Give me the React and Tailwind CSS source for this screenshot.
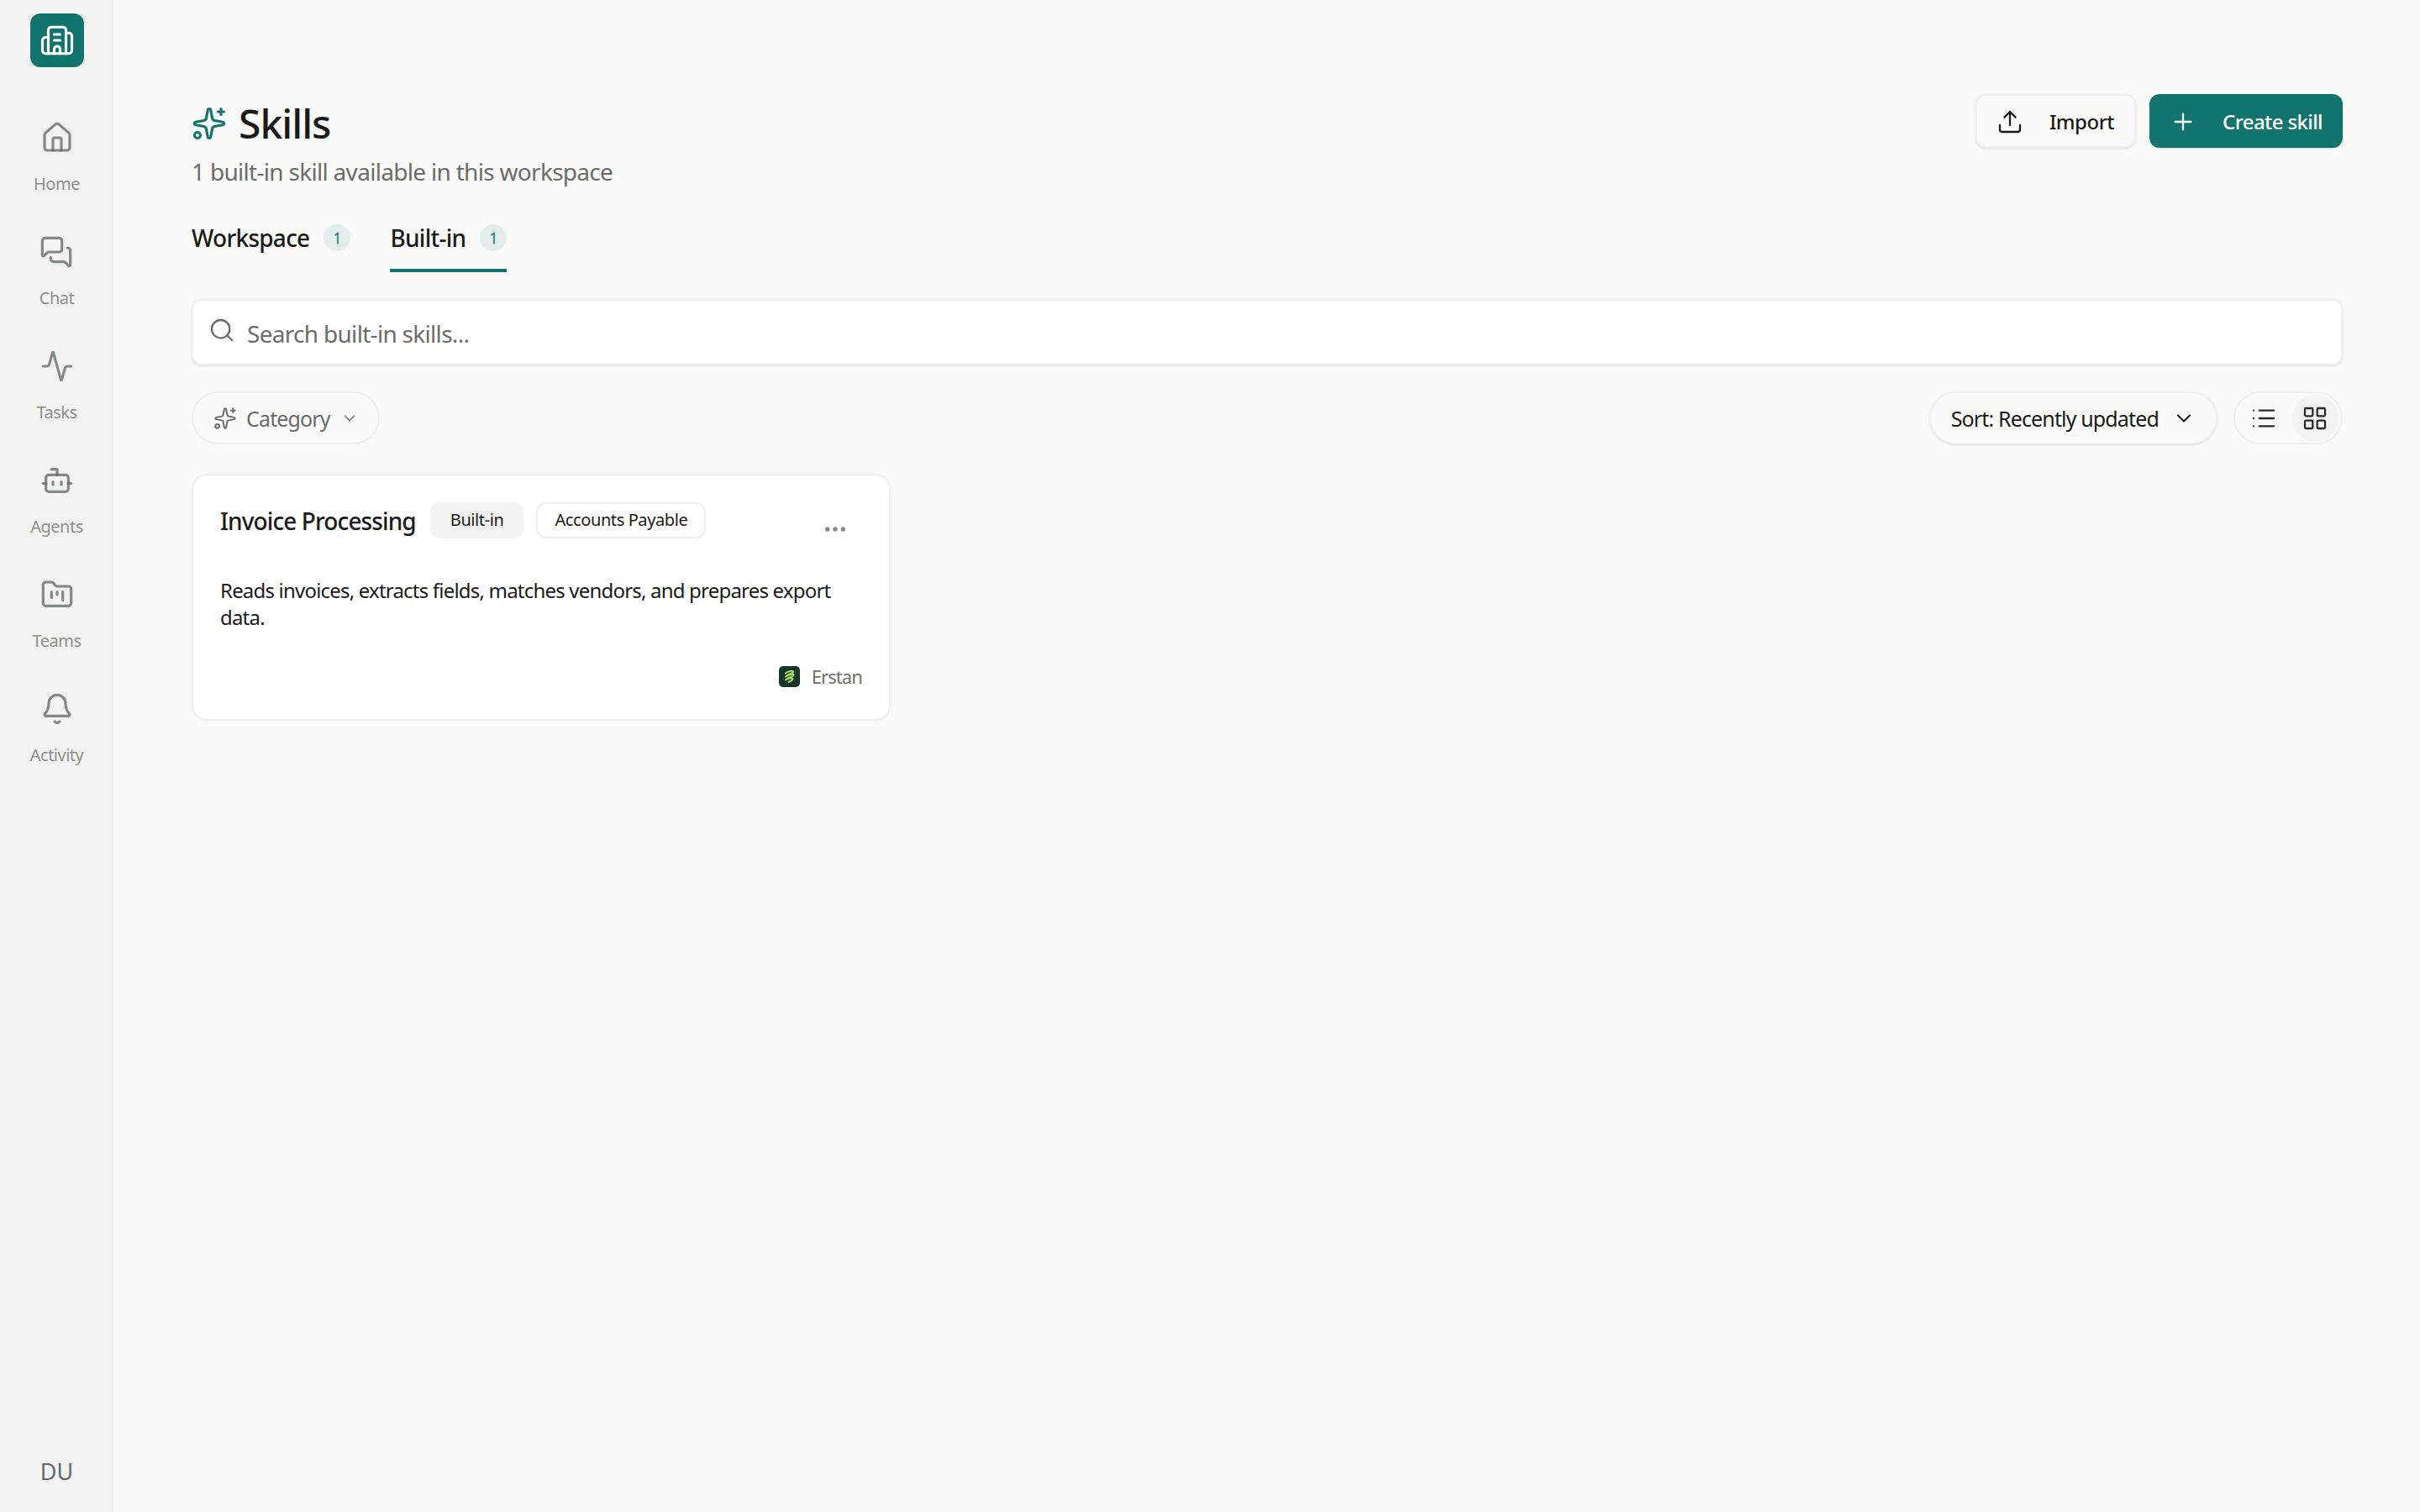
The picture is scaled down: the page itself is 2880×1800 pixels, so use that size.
import { House, MessagesSquare, Activity, Bot, FolderKanban, Bell, Building2, Sparkles, Upload, Plus, Search, ChevronDown, List, LayoutGrid, Ellipsis } from "lucide-react";

const NAV = [
  { label: "Home", icon: House },
  { label: "Chat", icon: MessagesSquare },
  { label: "Tasks", icon: Activity },
  { label: "Agents", icon: Bot },
  { label: "Teams", icon: FolderKanban },
  { label: "Activity", icon: Bell },
];

function Sidebar() {
  return (
    <aside className="flex w-[135px] shrink-0 flex-col items-center border-r-2 border-[#efefed] bg-[#f3f3f2] pl-[2px]">
      <div className="mt-4 flex h-[64px] w-[64px] items-center justify-center rounded-xl bg-[#12756d]">
        <Building2 size={42} strokeWidth={1.8} className="text-white" />
      </div>
      <nav className="mt-[64px] flex flex-col items-center">
        {NAV.map((item) => (
          <div key={item.label} className="flex h-[136px] flex-col items-center">
            <item.icon size={40} strokeWidth={1.9} className="text-[#5d6562]/75" />
            <span className="mt-[21px] text-[20px] leading-7 tracking-[-0.5px] text-[#8f8f8d]">{item.label}</span>
          </div>
        ))}
      </nav>
      <div className="mt-auto pb-[30px] text-[27px] leading-9 text-[#66686a]">DU</div>
    </aside>
  );
}

function Tab({ label, count, active }) {
  return (
    <div className={`flex h-[78px] items-center gap-[17px] border-b-4 ${active ? "border-[#12756d]" : "border-transparent"}`}>
      <span className="text-[28px] font-medium tracking-[-0.75px] text-[#1a1a1a]">{label}</span>
      <span className="flex h-8 w-8 items-center justify-center rounded-full bg-[#e3edeb] text-[18px] text-[#12756d]">{count}</span>
    </div>
  );
}

function SkillCard() {
  return (
    <div className="h-[294px] w-[832px] rounded-[18px] border-2 border-[#eeeeec] bg-white px-8 pt-[32px]">
      <div className="flex items-start">
        <h3 className="mt-[2px] text-[28px] leading-10 font-medium tracking-[-0.9px] text-[#1a1a1a]">Invoice Processing</h3>
        <span className="ml-[17px] flex h-[43px] items-center rounded-xl bg-[#f3f3f1] px-[24px] pb-[2px] text-[20px] tracking-[-0.4px] text-[#1a1a1a]">Built-in</span>
        <span className="ml-[15px] flex h-[43px] items-center rounded-xl border-2 border-[#eeeeec] px-5 pb-[2px] text-[20px] tracking-[-0.4px] text-[#1a1a1a]">Accounts Payable</span>
        <Ellipsis size={32} strokeWidth={2} className="mt-4 ml-auto mr-4 text-[#85898a]" />
      </div>
      <p className="mt-[41px] text-[24px] leading-8 tracking-[-0.8px] text-[#1a1a1a]">
        Reads invoices, extracts fields, matches vendors, and prepares export data.
      </p>
      <div className="mt-[38px] flex items-center justify-end gap-[14px]">
        <svg width="25" height="25" viewBox="0 0 25 25">
          <rect width="25" height="25" rx="5" fill="#17352f" />
          <path d="M8 8.500c3-2.500 8-3.500 9-2s-7 3.500-9 6c3-2.500 9-3.500 9.500-2s-7.500 3.500-9.500 6c3-2.500 8-3 8.500-1.500s-3 3-5 4" fill="none" stroke="#a9e24f" strokeWidth="2" strokeLinecap="round" strokeLinejoin="round" />
        </svg>
        <span className="text-[22px] tracking-[-0.9px] text-[#6f6f6d]">Erstan</span>
      </div>
    </div>
  );
}

export default function App() {
  return (
    <div className="flex min-h-[1800px] bg-[#fafaf8] font-['Noto_Sans','Open_Sans',sans-serif]">
      <Sidebar />
      <main className="min-w-0 flex-1 pt-[112px] pr-[92px] pl-[93px]">
        <div className="flex items-start justify-between">
          <div>
            <div className="flex h-[70px] items-center gap-[14px]">
              <Sparkles size={42} strokeWidth={1.8} className="text-[#12756d]" />
              <h1 className="text-[48px] leading-none font-medium tracking-[-1px] text-[#1a1a1a]">Skills</h1>
            </div>
            <p className="mt-[2px] text-[28px] leading-10 tracking-[-0.7px] text-[#6b6b69]">1 built-in skill available in this workspace</p>
          </div>
          <div className="flex items-center gap-4">
            <button type="button" className="flex h-[64px] w-[191px] items-center justify-between rounded-xl border-2 border-[#f0f0ee] bg-[#fafaf8] pt-[2px] pr-[24px] pl-[23px] text-[24px] font-medium tracking-[-0.5px] text-[#1a1a1a] shadow-sm">
              <Upload size={32} strokeWidth={1.7} />
              Import
            </button>
            <button type="button" className="flex h-[64px] w-[230px] items-center justify-between rounded-xl bg-[#12756d] pt-[2px] pr-[24px] pl-[24px] text-[24px] font-medium tracking-[-0.6px] text-white shadow-sm">
              <Plus size={32} strokeWidth={1.7} />
              Create skill
            </button>
          </div>
        </div>

        <div className="mt-[22px] flex gap-[47px]">
          <Tab label="Workspace" count={1} />
          <Tab label="Built-in" count={1} active />
        </div>

        <div className="mt-8 flex h-[79px] items-center gap-[14px] rounded-xl border-2 border-[#f0f0ee] bg-white pt-[2px] pr-5 pl-[18px] shadow-sm">
          <Search size={32} strokeWidth={1.7} className="-mt-[8px] text-[#6b6b69]" />
          <span className="text-[28px] tracking-[-0.7px] text-[#6b6b69]">Search built-in skills...</span>
        </div>

        <div className="mt-[31px] flex items-center justify-between">
          <button type="button" className="flex h-[63px] items-center gap-2 rounded-full border-2 border-[#efefed] pt-[2px] pr-[23px] pl-[24px] text-[25px] tracking-[-0.85px] text-[#6b6b69]">
            <Sparkles size={28} strokeWidth={1.7} className="-mt-[2px]" />
            <span className="ml-[3px]">Category</span>
            <ChevronDown size={22} strokeWidth={1.8} className="ml-[4px] -mt-[2px]" />
          </button>
          <div className="flex items-center gap-[19px]">
            <button type="button" className="flex h-[63px] items-center gap-4 rounded-full border-2 border-[#efefed] px-6 pt-[2px] text-[25px] tracking-[-0.85px] text-[#1a1a1a] shadow-sm">
              Sort: Recently updated
              <ChevronDown size={28} strokeWidth={1.8} className="-mt-[2px]" />
            </button>
            <div className="flex h-[63px] w-[130px] items-center justify-end rounded-full border-2 border-[#efefed]">
              <div className="flex h-[56px] w-[71px] items-center justify-center">
                <List size={32} strokeWidth={1.7} className="text-[#2a2a2a]" />
              </div>
              <div className="mr-[4px] flex h-[56px] w-[56px] items-center justify-center rounded-full bg-[#f3f3f1]">
                <LayoutGrid size={32} strokeWidth={1.7} className="text-[#2a2a2a]" />
              </div>
            </div>
          </div>
        </div>

        <div className="mt-[35px]">
          <SkillCard />
        </div>
      </main>
    </div>
  );
}
